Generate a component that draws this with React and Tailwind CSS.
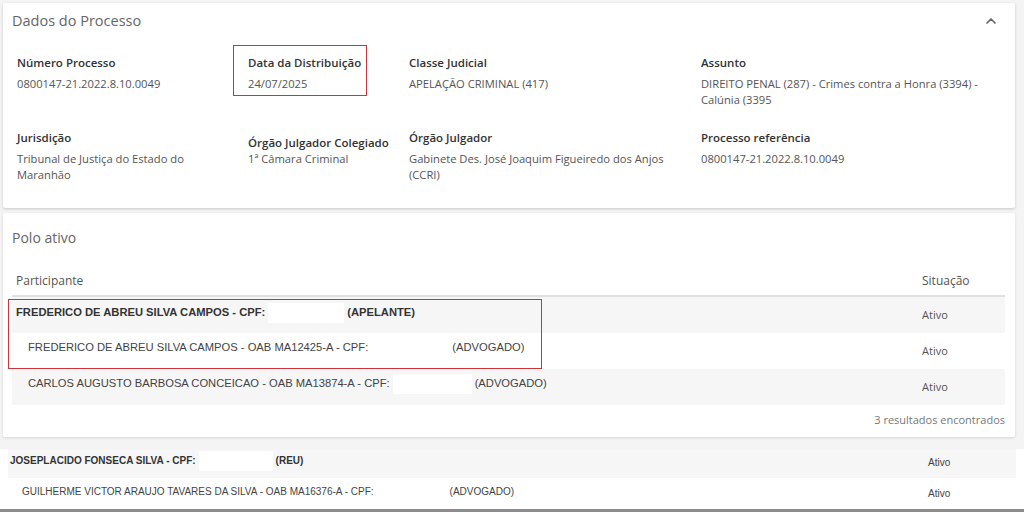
import { ChevronUp } from "lucide-react";

const fields = [
  [
    { label: "Número Processo", value: "0800147-21.2022.8.10.0049" },
    { label: "Data da Distribuição", value: "24/07/2025", boxed: true },
    { label: "Classe Judicial", value: "APELAÇÃO CRIMINAL (417)" },
    { label: "Assunto", value: "DIREITO PENAL (287) - Crimes contra a Honra (3394) - Calúnia (3395" },
  ],
  [
    { label: "Jurisdição", value: "Tribunal de Justiça do Estado do Maranhão" },
    { label: "Órgão Julgador Colegiado", value: "1ª Câmara Criminal", shifted: true },
    { label: "Órgão Julgador", value: "Gabinete Des. José Joaquim Figueiredo dos Anjos (CCRI)" },
    { label: "Processo referência", value: "0800147-21.2022.8.10.0049" },
  ],
];

const widths = ["w-[231px] pr-[40px]", "w-[161px]", "w-[292px] pr-[20px]", "w-[300px] pr-[10px]"];

function Field({ item, className }) {
  return (
    <div className={className}>
      <div className={`text-[11.5px] font-semibold leading-[18px] text-[#333] ${item.shifted ? "pt-[5px]" : ""}`}>
        {item.label}
      </div>
      <div className={`${item.shifted ? "mt-[-1px]" : "mt-[4px]"} text-[11.2px] leading-[16px] text-[#555]`}>
        {item.value}
      </div>
    </div>
  );
}

function Blank({ w, bg }) {
  return <span className={`mx-[3px] inline-block h-[20px] align-middle ${w} ${bg ? "bg-white" : ""}`} />;
}

export default function App() {
  return (
    <div className="relative h-[512px] w-[1024px] overflow-hidden bg-[#f4f4f4] font-['Open_Sans',sans-serif]">
      {/* Dados do Processo */}
      <div className="ml-[3px] mt-[3px] h-[205px] w-[1012px] rounded-[2px] bg-white shadow-[0_1px_3px_rgba(0,0,0,0.18)]">
        <div className="flex items-center justify-between pl-[9px] pr-[16px] pt-[8px]">
          <h2 className="text-[14.5px] leading-[20px] text-[#666]">Dados do Processo</h2>
          <ChevronUp size={16} strokeWidth={2.6} className="text-[#666]" />
        </div>
        <div className="mt-[23px] pl-[14px]">
          {fields.map((row, i) => (
            <div key={i} className={`flex ${i === 1 ? "mt-[21px]" : ""}`}>
              {row.map((item, j) =>
                item.boxed ? (
                  <div key={j} className={`${widths[j]} relative`}>
                    <Field item={item} />
                    <div className="absolute left-[-15px] top-[-9px] h-[51px] w-[134px] border border-[#c9353a]" />
                  </div>
                ) : (
                  <Field key={j} item={item} className={`${widths[j]} ${j === 0 && i === 1 ? "pr-[50px]" : ""}`} />
                )
              )}
            </div>
          ))}
        </div>
      </div>

      {/* Polo ativo */}
      <div className="ml-[3px] mt-[5px] h-[224px] w-[1012px] rounded-[2px] bg-white shadow-[0_1px_3px_rgba(0,0,0,0.12)]">
        <h2 className="pl-[9px] pt-[15px] text-[14px] leading-[20px] text-[#666]">Polo ativo</h2>
        <div className="ml-[9px] w-[993px]">
          <div className="mt-[14px] flex h-[35px] items-center border-b-2 border-[#e0e0e0] pt-[5px] text-[12px] text-[#555]">
            <div className="flex-1 pl-[4px]">Participante</div>
            <div className="w-[83px]">Situação</div>
          </div>
          <div className="relative font-['Liberation_Sans',Arial,sans-serif] text-[11.2px] leading-[16px]">
            <div className="flex h-[36px] bg-[#f6f6f6]">
              <div className="flex-1 pl-[4px] pt-[6px] font-bold text-[#333]">
                FREDERICO DE ABREU SILVA CAMPOS - CPF:
                <Blank w="w-[76px]" bg />
                (APELANTE)
              </div>
              <div className="w-[83px] pt-[10px] font-['Open_Sans',sans-serif] text-[11px] text-[#555]">Ativo</div>
            </div>
            <div className="flex h-[36px] bg-white">
              <div className="flex-1 pl-[16px] pt-[5px] text-[#444]">
                FREDERICO DE ABREU SILVA CAMPOS - OAB MA12425-A - CPF:
                <Blank w="w-[78px]" />
                (ADVOGADO)
              </div>
              <div className="w-[83px] pt-[10px] font-['Open_Sans',sans-serif] text-[11px] text-[#555]">Ativo</div>
            </div>
            <div className="flex h-[36px] bg-[#f6f6f6]">
              <div className="flex-1 pl-[16px] pt-[5px] text-[#444]">
                CARLOS AUGUSTO BARBOSA CONCEICAO - OAB MA13874-A - CPF:
                <Blank w="w-[79px]" bg />
                (ADVOGADO)
              </div>
              <div className="w-[83px] pt-[10px] font-['Open_Sans',sans-serif] text-[11px] text-[#555]">Ativo</div>
            </div>
            <div className="absolute left-[-4px] top-[2px] h-[70px] w-[534px] border border-[#c9353a]" />
          </div>
          <div className="mt-[7px] text-right text-[11px] leading-[16px] text-[#777]">3 resultados encontrados</div>
        </div>
      </div>

      {/* Polo passivo (recorte) */}
      <div className="mt-[12px] bg-white">
        <div className="mx-[8px] font-['Liberation_Sans',Arial,sans-serif] text-[10px] leading-[14px]">
          <div className="flex h-[29px] bg-[#f6f6f6]">
            <div className="flex-1 pl-[2px] pt-[2px] font-bold text-[#333]">
              JOSEPLACIDO FONSECA SILVA - CPF:
              <Blank w="w-[74px]" bg />
              (REU)
            </div>
            <div className="w-[88px] pt-[7px] text-[#444]">Ativo</div>
          </div>
          <div className="flex h-[31px] bg-white">
            <div className="flex-1 pl-[14px] pt-[4px] text-[#444]">
              GUILHERME VICTOR ARAUJO TAVARES DA SILVA - OAB MA16376-A - CPF:
              <Blank w="w-[70px]" />
              (ADVOGADO)
            </div>
            <div className="w-[88px] pt-[9px] text-[#444]">Ativo</div>
          </div>
        </div>
        <div className="h-[3px] bg-[#8c8c8c]" />
      </div>
    </div>
  );
}
